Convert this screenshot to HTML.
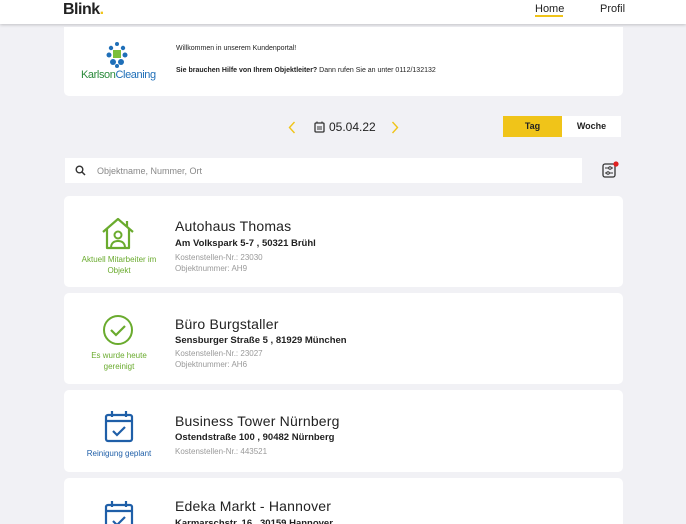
<!DOCTYPE html><html><head><style>
*{margin:0;padding:0;box-sizing:border-box}
html,body{width:686px;height:524px;overflow:hidden}
body{background:#f1f1f5;font-family:"Liberation Sans",sans-serif;position:relative;color:#222}
.hdr{position:absolute;left:0;top:0;width:686px;height:24px;background:#fff;box-shadow:0 1px 3px rgba(0,0,0,.2)}
.card{position:absolute;left:64px;width:559px;background:#fff;border-radius:5px}
.t{position:absolute;left:111px;font-size:14px;color:#222;letter-spacing:0.2px}
.a{position:absolute;left:111px;font-size:9.5px;font-weight:bold;color:#222}
.g{position:absolute;left:111px;font-size:8px;color:#9a9a9a;line-height:11px}
.lbl{position:absolute;width:110px;left:0;text-align:center;font-size:8px;line-height:11px}
</style></head><body>
<div class="hdr">
<div style="position:absolute;left:63px;top:1px;font-size:16px;font-weight:bold;letter-spacing:-0.5px">Blink<span style="color:#f0c419">.</span></div>
<div style="position:absolute;left:535px;top:3px;font-size:11px">Home</div>
<div style="position:absolute;left:535px;top:15px;width:28px;height:2px;background:#f0c419"></div>
<div style="position:absolute;left:600px;top:3px;font-size:11px">Profil</div>
</div>
<div class="card" style="top:27px;height:69px;border-radius:0 0 5px 5px">
<svg style="position:absolute;left:38px;top:12px" width="30" height="30" viewBox="0 0 30 30"><g fill="#1f6fb8"><circle cx="15" cy="5" r="2"/><circle cx="9" cy="9" r="2.2"/><circle cx="21" cy="9" r="2.2"/><circle cx="7" cy="16" r="2.5"/><circle cx="23" cy="16" r="2.5"/><circle cx="11" cy="23" r="3"/><circle cx="19" cy="23" r="3"/><circle cx="15" cy="27" r="2"/></g><rect x="11" y="11" width="8" height="8" fill="#7bbf3a"/></svg>
<div style="position:absolute;left:17px;top:42px;font-size:11px;color:#2a8a3a;letter-spacing:-0.4px">Karlson<span style="color:#1f6fb8">Cleaning</span></div>
<div style="position:absolute;left:112px;top:18px;font-size:7px">Willkommen in unserem Kundenportal!</div>
<div style="position:absolute;left:112px;top:40px;font-size:7px"><b>Sie brauchen Hilfe von Ihrem Objektleiter?</b> Dann rufen Sie an unter 0112/132132</div>
</div>
<svg style="position:absolute;left:288px;top:121px" width="8" height="13" viewBox="0 0 8 13"><path d="M6.5 1L1.5 6.5 6.5 12" fill="none" stroke="#f0c419" stroke-width="1.4"/></svg>
<svg style="position:absolute;left:314px;top:121px" width="11" height="12" viewBox="0 0 11 12"><rect x="1" y="2" width="9" height="9" rx="1" fill="none" stroke="#333" stroke-width="1.3"/><path d="M3 0.5v2M8 0.5v2M3 6h5M3 8h5" stroke="#333" stroke-width="1.1"/></svg>
<div style="position:absolute;left:329px;top:120px;font-size:12px">05.04.22</div>
<svg style="position:absolute;left:391px;top:121px" width="8" height="13" viewBox="0 0 8 13"><path d="M1.5 1l5 5.5-5 5.5" fill="none" stroke="#f0c419" stroke-width="1.4"/></svg>
<div style="position:absolute;left:503px;top:116px;width:59px;height:21px;background:#f0c419;font-size:9px;font-weight:bold;text-align:center;line-height:21px">Tag</div>
<div style="position:absolute;left:562px;top:116px;width:59px;height:21px;background:#fff;font-size:9px;font-weight:bold;text-align:center;line-height:21px">Woche</div>
<div style="position:absolute;left:65px;top:158px;width:517px;height:25px;background:#fff">
<svg style="position:absolute;left:10px;top:7px" width="11" height="11" viewBox="0 0 11 11"><circle cx="4.5" cy="4.5" r="3.3" fill="none" stroke="#333" stroke-width="1.4"/><path d="M7 7l3 3" stroke="#333" stroke-width="1.5"/></svg>
<div style="position:absolute;left:32px;top:8px;font-size:9px;color:#888">Objektname, Nummer, Ort</div>
</div>
<svg style="position:absolute;left:601px;top:161px" width="18" height="18" viewBox="0 0 18 18"><rect x="2" y="3" width="12" height="13" rx="2" fill="none" stroke="#333" stroke-width="1.3"/><path d="M4 7h8M4 12h8" stroke="#333" stroke-width="1"/><circle cx="9" cy="7" r="1.3" fill="#fff" stroke="#333"/><circle cx="7" cy="12" r="1.3" fill="#fff" stroke="#333"/><circle cx="15" cy="3" r="2.6" fill="#e02020"/></svg>

<div class="card" style="top:196px;height:91px">
<svg style="position:absolute;left:36px;top:20px" width="36" height="34" viewBox="0 0 36 34"><path d="M3 16L18 3l15 13M7 13v19h22V13M27 5v6" fill="none" stroke="#6aab2e" stroke-width="2.2" stroke-linejoin="round"/><circle cx="18" cy="19" r="3.5" fill="none" stroke="#6aab2e" stroke-width="2"/><path d="M11 32c0-5 3-7 7-7s7 2 7 7" fill="none" stroke="#6aab2e" stroke-width="2"/></svg>
<div class="lbl" style="top:58px;color:#6aab2e">Aktuell Mitarbeiter im<br>Objekt</div>
<div class="t" style="top:22px">Autohaus Thomas</div>
<div class="a" style="top:42px">Am Volkspark 5-7 , 50321 Brühl</div>
<div class="g" style="top:56px">Kostenstellen-Nr.: 23030<br>Objektnummer: AH9</div>
</div>

<div class="card" style="top:293px;height:91px">
<svg style="position:absolute;left:38px;top:21px" width="32" height="32" viewBox="0 0 32 32"><circle cx="16" cy="16" r="14" fill="none" stroke="#6aab2e" stroke-width="2"/><path d="M9 16l5 5 9-9" fill="none" stroke="#6aab2e" stroke-width="2.2"/></svg>
<div class="lbl" style="top:57px;color:#6aab2e">Es wurde heute<br>gereinigt</div>
<div class="t" style="top:23px">Büro Burgstaller</div>
<div class="a" style="top:42px">Sensburger Straße 5 , 81929 München</div>
<div class="g" style="top:55px">Kostenstellen-Nr.: 23027<br>Objektnummer: AH6</div>
</div>

<div class="card" style="top:390px;height:82px">
<svg style="position:absolute;left:40px;top:20px" width="30" height="33" viewBox="0 0 30 33"><rect x="2" y="5" width="26" height="26" rx="2" fill="none" stroke="#1f5fa8" stroke-width="2.2"/><path d="M2 11h26M8 1v6M22 1v6M9 21l4 4 8-8" fill="none" stroke="#1f5fa8" stroke-width="2.2"/></svg>
<div class="lbl" style="top:58px;color:#1f5fa8">Reinigung geplant</div>
<div class="t" style="top:23px">Business Tower Nürnberg</div>
<div class="a" style="top:42px">Ostendstraße 100 , 90482 Nürnberg</div>
<div class="g" style="top:56px">Kostenstellen-Nr.: 443521</div>
</div>

<div class="card" style="top:478px;height:60px">
<svg style="position:absolute;left:40px;top:22px" width="30" height="33" viewBox="0 0 30 33"><rect x="2" y="5" width="26" height="26" rx="2" fill="none" stroke="#1f5fa8" stroke-width="2.2"/><path d="M2 11h26M8 1v6M22 1v6M9 21l4 4 8-8" fill="none" stroke="#1f5fa8" stroke-width="2.2"/></svg>
<div class="t" style="top:20px">Edeka Markt - Hannover</div>
<div class="a" style="top:40px">Karmarschstr. 16 , 30159 Hannover</div>
</div>
</body></html>
